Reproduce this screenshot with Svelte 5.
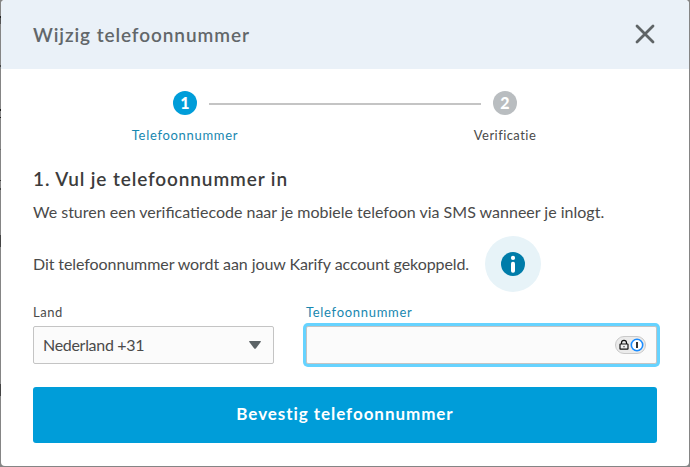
<script lang="ts">
  let country = "Nederland +31";
  let phone = "";

  const steps = [
    { number: 1, label: "Telefoonnummer", active: true },
    { number: 2, label: "Verificatie", active: false },
  ];
</script>

<div class="backdrop">
  <div class="modal">
    <header>
      <h2>Wijzig telefoonnummer</h2>
      <button class="close" aria-label="Sluiten">
        <svg width="20" height="20" viewBox="0 0 20 20">
          <path d="M2 2L18 18M18 2L2 18" />
        </svg>
      </button>
    </header>

    <div class="content">
      <div class="steps">
        {#each steps as step, i}
          {#if i > 0}
            <div class="line"></div>
          {/if}
          <div class="step" class:active={step.active}>
            <span class="number">{step.number}</span>
            <span class="step-label">{step.label}</span>
          </div>
        {/each}
      </div>

      <h3>1. Vul je telefoonnummer in</h3>
      <p class="intro">
        We sturen een verificatiecode naar je mobiele telefoon via SMS wanneer je inlogt.
      </p>

      <div class="info-row">
        <p class="linked">Dit telefoonnummer wordt aan jouw Karify account gekoppeld.</p>
        <div class="info">
          <svg width="24" height="24" viewBox="0 0 24 24">
            <circle cx="12" cy="12" r="12" fill="#007ca9" />
            <circle cx="12" cy="5.9" r="2.1" fill="#fff" />
            <rect x="10" y="9.8" width="4" height="11" rx="1.8" fill="#fff" />
          </svg>
        </div>
      </div>

      <div class="fields">
        <div class="field country">
          <span class="label">Land</span>
          <div class="input">
            <span class="value">{country}</span>
            <svg width="12" height="8" viewBox="0 0 12 8">
              <path d="M.7 0H11.3Q12.3 0 11.7.9L7 7.2Q6 8.3 5 7.2L.3.9Q-.3 0 .7 0Z" fill="#5c6366" />
            </svg>
          </div>
        </div>
        <div class="field phone">
          <span class="label">Telefoonnummer</span>
          <div class="input focused">
            <input type="tel" aria-label="Telefoonnummer" bind:value={phone} />
            <svg class="manager" width="31" height="18" viewBox="0 0 31 18">
              <rect x=".5" y=".5" width="30" height="17" rx="8.5" fill="#ebebeb" stroke="#c9c9c9" />
              <path d="M6.5 8V6.8a2.5 2.5 0 0 1 5 0V8" fill="none" stroke="#111" stroke-width="1.2" />
              <rect x="5" y="8" width="8" height="5.2" rx=".5" fill="#eee" stroke="#111" stroke-width="1.2" />
              <rect x="8.4" y="10" width="1.2" height="1.3" fill="#444" />
              <circle cx="22" cy="9" r="5.7" fill="#fff" stroke="#1a8cff" stroke-width="1.6" />
              <rect x="21" y="6" width="2" height="6" fill="#333" />
            </svg>
          </div>
        </div>
      </div>

      <button class="submit"><span>Bevestig telefoonnummer</span></button>
    </div>
  </div>
</div>

<style>
  :global(body) {
    margin: 0;
    overflow: hidden;
  }

  .backdrop {
    box-sizing: border-box;
    width: 690px;
    height: 467px;
    padding: 0 1px 1px;
    /* slivers of the dimmed page behind the dialog */
    background:
      linear-gradient(#222, #222) 0 16px / 1px 2px no-repeat,
      linear-gradient(#555, #555) 0 18px / 1px 6px no-repeat,
      linear-gradient(#444, #444) 0 65px / 1px 2px no-repeat,
      linear-gradient(#222, #222) 0 109px / 1px 2px no-repeat,
      linear-gradient(#222, #222) 0 117px / 1px 1px no-repeat,
      linear-gradient(#666, #666) 0 149px / 1px 1px no-repeat,
      linear-gradient(#333, #333) 0 180px / 1px 1px no-repeat,
      linear-gradient(#444, #444) 0 188px / 1px 2px no-repeat,
      linear-gradient(#444, #444) 0 235px / 1px 12px no-repeat,
      linear-gradient(#444, #444) 0 384px / 1px 12px no-repeat,
      #858585;
    font-family: Lato, "Liberation Sans", sans-serif;
    color: #4a4a4a;
  }

  .modal {
    height: 466px;
    border-radius: 4px;
    overflow: hidden;
    background: #fff;
  }

  header {
    box-sizing: border-box;
    height: 69px;
    padding: 0 34px 0 32px;
    display: flex;
    align-items: center;
    justify-content: space-between;
    background: #eaf1f8;
  }

  h2,
  h3,
  p {
    margin: 0;
    white-space: nowrap;
  }

  h2 {
    font-size: 19px;
    font-weight: 600;
    line-height: 24px;
    letter-spacing: 0.92px;
    color: #62676a;
  }

  button {
    border: 0;
    padding: 0;
    font-family: inherit;
  }

  .close {
    display: flex;
    padding-bottom: 1px;
    background: none;
  }

  .close path {
    fill: none;
    stroke: #5f6466;
    stroke-width: 2.8;
    stroke-linecap: round;
  }

  .content {
    padding: 22px 32px 0;
  }

  .steps {
    display: flex;
    justify-content: center;
    height: 74px;
  }

  .step {
    width: 24px;
    display: flex;
    flex-direction: column;
    align-items: center;
    gap: 11px;
  }

  .number {
    width: 24px;
    height: 24px;
    border-radius: 50%;
    background: #b9bdc0;
    color: #fff;
    font-size: 16px;
    font-weight: 900;
    line-height: 24px;
    text-align: center;
  }

  .step-label {
    font-size: 13px;
    line-height: 18px;
    letter-spacing: 0.45px;
    white-space: nowrap;
  }

  .active .number {
    background: #009dd9;
  }

  .active .step-label,
  .phone .label {
    color: #1887b0;
    letter-spacing: 0.7px;
  }

  .line {
    width: 272px;
    height: 2px;
    margin: 12px 12px 0;
    background: #c4c4c4;
  }

  h3 {
    font-size: 19px;
    font-weight: 600;
    line-height: 28px;
    letter-spacing: 0.88px;
    color: #3c3c3c;
  }

  p {
    font-size: 16px;
    line-height: 24px;
  }

  .intro {
    margin-top: 7px;
  }

  .info-row {
    display: flex;
    align-items: center;
    height: 56px;
    margin-top: 12px;
  }

  .linked {
    width: 452px;
    letter-spacing: -0.08px;
  }

  .info {
    width: 56px;
    height: 56px;
    border-radius: 50%;
    background: #e7f3f8;
    display: flex;
    align-items: center;
    justify-content: center;
  }

  .fields {
    display: flex;
    gap: 32px;
    margin-top: 11px;
  }

  .country {
    width: 241px;
  }

  .phone {
    flex: 1;
  }

  .label {
    display: block;
    font-size: 13px;
    line-height: 18px;
    letter-spacing: 0.5px;
    margin-bottom: 5px;
  }

  .input {
    box-sizing: border-box;
    height: 38px;
    padding: 0 12px 0 9px;
    display: flex;
    align-items: center;
    justify-content: space-between;
    border: 1px solid #c4c4c4;
    border-radius: 2px;
    background: #fbfbfb;
  }

  .input.focused {
    padding-right: 10px;
    box-shadow: 0 0 0 3px #66d3ff;
  }

  .input input {
    flex: 1;
    min-width: 0;
    border: 0;
    padding: 0;
    outline: none;
    background: none;
    font: inherit;
  }

  .value {
    font-size: 16px;
    letter-spacing: -0.3px;
    padding-bottom: 1px;
  }

  .submit {
    width: 100%;
    height: 56px;
    margin-top: 23px;
    padding-bottom: 3px;
    border-radius: 3px;
    background: #009dd9;
    color: #fff;
    font-size: 17px;
    font-weight: 700;
    letter-spacing: 0.95px;
  }
</style>
